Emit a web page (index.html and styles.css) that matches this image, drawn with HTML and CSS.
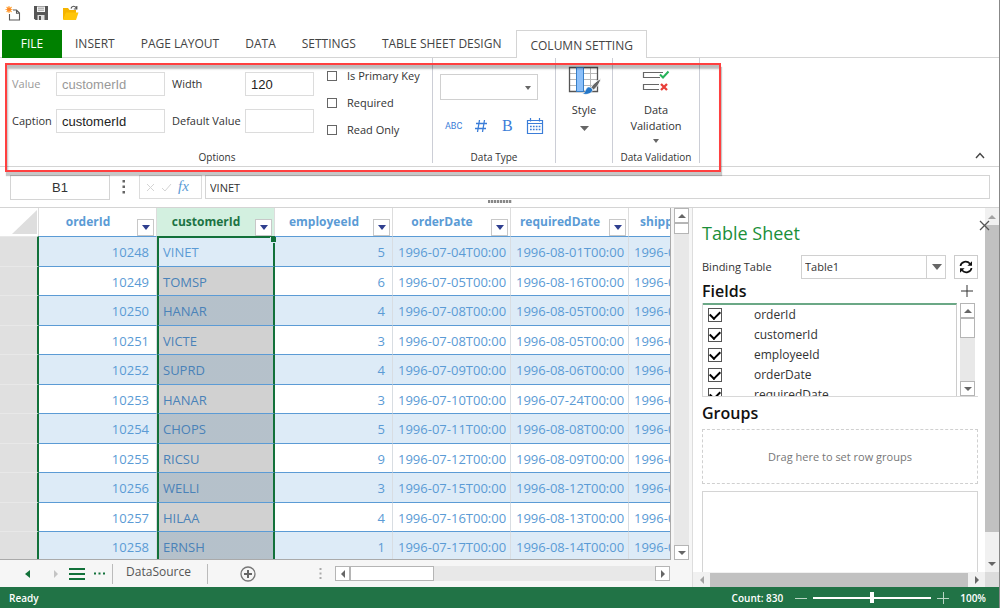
FILE: index.html
```html
<!DOCTYPE html>
<html lang="en">
<head>
<meta charset="utf-8">
<title>Table Sheet Designer</title>
<link rel="stylesheet" href="styles.css">
</head>
<body>
<div class="app">
  <div class="quick">
    <button aria-label="New"><svg width="16" height="16" viewBox="0 0 16 16"><path d="M8 5h3.500l3 3v7H4.500V9M11.500 5v3.200h3" fill="none" stroke="#5a5a5a" stroke-width="1.100"/><path d="M4 1v7M.5 4.500h7M1.600 2l5 5M6.600 2l-5 5" stroke="#ffac45" stroke-width="1.200"/><circle cx="4" cy="4.500" r="2" fill="#ff8a2a"/></svg></button>
    <button aria-label="Save"><svg width="16" height="16" viewBox="0 0 16 16"><path d="M1 1h14v14H2.500L1 13.500z" fill="#555"/><path d="M4 1.500h8V7H4z" fill="#f4f4f4"/><path d="M5 3.200h6M5 5.200h6" stroke="#888" stroke-width=".8"/><path d="M4.500 10h7v5h-7z" fill="#ddd"/><path d="M6 11h2v4H6z" fill="#555"/></svg></button>
    <button aria-label="Open"><svg width="18" height="16" viewBox="0 0 18 16"><path d="M2 14V3h5l1.500 2H15v3H5.500L3 14" fill="#f5b400"/><path d="M5 7.500H17.500L15 15H2z" fill="#ffc60a"/><path d="M10 3.500c.8-3 4.500-3 5.500.2M15.800 1v3h-3" fill="none" stroke="#555" stroke-width="1.200"/></svg></button>
  </div>
  <nav class="tabs">
    <button class="tab file">FILE</button>
    <button class="tab">INSERT</button>
    <button class="tab">PAGE LAYOUT</button>
    <button class="tab">DATA</button>
    <button class="tab">SETTINGS</button>
    <button class="tab">TABLE SHEET DESIGN</button>
    <button class="tab active">COLUMN SETTING</button>
  </nav>
  <section class="ribbon">
    <div class="group options">
      <div class="group-body">
        <div class="fields">
          <label class="muted" for="value">Value</label><input id="value" class="muted" value="customerId" disabled>
          <label class="second" for="width">Width</label><input id="width" value="120">
          <label for="caption">Caption</label><input id="caption" value="customerId">
          <label class="second" for="default">Default Value</label><input id="default">
        </div>
        <div class="checks">
          <label><input type="checkbox">Is Primary Key</label>
          <label><input type="checkbox">Required</label>
          <label><input type="checkbox">Read Only</label>
        </div>
      </div>
      <div class="caption">Options</div>
    </div>
    <div class="group types">
      <div class="type-body">
        <div class="combo"><select aria-label="Data type"><option></option></select><svg width="6" height="4" viewBox="0 0 6 4"><path d="M0 0h6L3 4z" fill="#666"/></svg></div>
        <div class="type-icons">
          <button class="abc">ABC</button>
          <button aria-label="Number"><svg width="14" height="14" viewBox="0 0 14 14"><path d="M5.500 1L3.500 13M10.500 1L8.500 13M2 4.500h11M1 9.500h11" stroke="#3b7dd8" stroke-width="1.300"/></svg></button>
          <button class="bold">B</button>
          <button aria-label="Date"><svg width="18" height="18" viewBox="0 0 18 18"><path d="M1.500 3.500h15v13h-15zM1.500 6.500h15M4.500 1v3.500M13.500 1v3.500" fill="none" stroke="#3b7dd8" stroke-width="1.200"/><path d="M4 9.500h10.500M4 12.500h10.500" stroke="#3b7dd8" stroke-width="1.700" stroke-dasharray="1.700 1.200"/></svg></button>
        </div>
      </div>
      <div class="caption">Data Type</div>
    </div>
    <div class="group style">
      <button class="big">
        <svg width="33" height="30" viewBox="0 0 33 30"><path d="M1.500 2.500h28v24h-28z" fill="#fff"/><path d="M1.500 8.500h28M1.500 14.500h28M1.500 20.500h28M15.500 2.500v24M22.500 2.500v24" stroke="#b8b8b8"/><path d="M1.500 2.500h28v24h-28z" fill="none" stroke="#555" stroke-width="1.300"/><path d="M8.500 2.500h7v24h-7z" fill="#8cc0fa" stroke="#377fc8"/><path d="M33 13.500c-4 2-8.500 6-10 9l2.500 2.500c3-2 6.500-7 7.500-11.500" fill="#666" stroke="#fff" stroke-width=".9"/><path d="M20.500 22c2.500 0 4.500 2 4 3.800-1.500 3.200-6.500 4.200-10 3 3.500-.8 2.500-5.800 6-6.800" fill="#2477c8" stroke="#fff" stroke-width=".5"/></svg>
        <span>Style</span>
        <svg class="arrow" width="9" height="5" viewBox="0 0 9 5"><path d="M0 0h9L4.500 5z" fill="#666"/></svg>
      </button>
    </div>
    <div class="group validation">
      <button class="big">
        <svg width="28" height="30" viewBox="0 0 28 30"><path d="M17 7.500H1.500v5H18M17 19.500H1.500v5H17M17 7.500h4" fill="none" stroke="#666" stroke-width="1.200"/><path d="M18 9.500l3 3L26.500 6.500" fill="none" stroke="#26b35a" stroke-width="2"/><path d="M19 19l6 6M25 19l-6 6" stroke="#e83e38" stroke-width="2.300"/></svg>
        <span>Data<br>Validation</span>
        <svg class="arrow" width="6" height="4" viewBox="0 0 6 4"><path d="M0 0h6L3 4z" fill="#666"/></svg>
      </button>
      <div class="caption">Data Validation</div>
    </div>
    <button class="collapse" aria-label="Collapse ribbon"><svg width="10" height="7" viewBox="0 0 10 7"><path d="M1 6l4-4.500L9 6" fill="none" stroke="#444" stroke-width="1.400"/></svg></button>
    <div class="highlight"></div>
  </section>
  <section class="formula">
    <input class="name" aria-label="Cell" value="B1">
    <svg class="dots" width="4" height="14" viewBox="0 0 4 14"><path d="M.5 0h2.500v2.500H.5zM.5 5.500h2.500v2.500H.5zM.5 11h2.500v2.500H.5z" fill="#666"/></svg>
    <div class="fx"><svg width="9" height="9" viewBox="0 0 9 9"><path d="M1 1l7 7M8 1L1 8" stroke="#d4d4d4"/></svg><svg width="11" height="9" viewBox="0 0 11 9"><path d="M1 5l3 3 6-7" fill="none" stroke="#d4d4d4"/></svg><button>fx</button></div>
    <input class="expr" aria-label="Formula" value="VINET">
    <div class="grip"></div>
  </section>
  <main class="main">
    <div class="left">
      <div class="grid-area">
        <div class="sheet">
          <table>
            <colgroup><col class="c-head"><col><col><col><col><col><col></colgroup>
            <thead><tr>
              <th><svg class="corner" width="25" height="24" viewBox="0 0 25 24"><path d="M25 0v24H0z" fill="#dedede"/></svg></th>
              <th><div><span>orderId</span><button aria-label="Filter orderId"></button></div></th>
              <th class="sel"><div><span>customerId</span><button aria-label="Filter customerId"></button></div></th>
              <th><div><span>employeeId</span><button aria-label="Filter employeeId"></button></div></th>
              <th><div><span>orderDate</span><button aria-label="Filter orderDate"></button></div></th>
              <th><div><span>requiredDate</span><button aria-label="Filter requiredDate"></button></div></th>
              <th><div><span>shippedDate</span><button aria-label="Filter shippedDate"></button></div></th>
            </tr></thead>
            <tbody>
              <tr><td></td><td>10248</td><td>VINET<i class="handle"></i></td><td>5</td><td>1996-07-04T00:00</td><td>1996-08-01T00:00</td><td>1996-07-16T00:00</td></tr>
              <tr><td></td><td>10249</td><td>TOMSP</td><td>6</td><td>1996-07-05T00:00</td><td>1996-08-16T00:00</td><td>1996-07-10T00:00</td></tr>
              <tr><td></td><td>10250</td><td>HANAR</td><td>4</td><td>1996-07-08T00:00</td><td>1996-08-05T00:00</td><td>1996-07-12T00:00</td></tr>
              <tr><td></td><td>10251</td><td>VICTE</td><td>3</td><td>1996-07-08T00:00</td><td>1996-08-05T00:00</td><td>1996-07-15T00:00</td></tr>
              <tr><td></td><td>10252</td><td>SUPRD</td><td>4</td><td>1996-07-09T00:00</td><td>1996-08-06T00:00</td><td>1996-07-11T00:00</td></tr>
              <tr><td></td><td>10253</td><td>HANAR</td><td>3</td><td>1996-07-10T00:00</td><td>1996-07-24T00:00</td><td>1996-07-16T00:00</td></tr>
              <tr><td></td><td>10254</td><td>CHOPS</td><td>5</td><td>1996-07-11T00:00</td><td>1996-08-08T00:00</td><td>1996-07-23T00:00</td></tr>
              <tr><td></td><td>10255</td><td>RICSU</td><td>9</td><td>1996-07-12T00:00</td><td>1996-08-09T00:00</td><td>1996-07-15T00:00</td></tr>
              <tr><td></td><td>10256</td><td>WELLI</td><td>3</td><td>1996-07-15T00:00</td><td>1996-08-12T00:00</td><td>1996-07-17T00:00</td></tr>
              <tr><td></td><td>10257</td><td>HILAA</td><td>4</td><td>1996-07-16T00:00</td><td>1996-08-13T00:00</td><td>1996-07-22T00:00</td></tr>
              <tr><td></td><td>10258</td><td>ERNSH</td><td>1</td><td>1996-07-17T00:00</td><td>1996-08-14T00:00</td><td>1996-07-23T00:00</td></tr>
            </tbody>
          </table>
        </div>
        <div class="vbar"><button class="up" aria-label="Up"></button><span class="thumb"></span><button class="down" aria-label="Down"></button></div>
      </div>
      <div class="sheetbar">
        <div class="sheetnav">
          <button class="tri l" aria-label="Previous"></button>
          <button class="tri r" aria-label="Next"></button>
          <button class="menu" aria-label="All sheets"><svg width="16" height="12" viewBox="0 0 16 12"><path d="M0 1h16M0 6h16M0 11h16" stroke="#12713a" stroke-width="2"/></svg></button>
          <button aria-label="More sheets"><svg width="11" height="3" viewBox="0 0 11 3"><path d="M0 .5h2v2H0zM4.500 .5h2v2h-2zM9 .5h2v2H9z" fill="#12713a"/></svg></button>
          <button class="source">DataSource</button>
          <button class="add" aria-label="Add sheet"><svg width="16" height="16" viewBox="0 0 16 16"><circle cx="8" cy="8" r="7" fill="none" stroke="#777" stroke-width="1.300"/><path d="M8 4v8M4 8h8" stroke="#666" stroke-width="2"/></svg></button>
          <svg class="more" width="3" height="11" viewBox="0 0 3 11"><path d="M.5 0h2v2h-2zM.5 4.500h2v2h-2zM.5 9h2v2h-2z" fill="#aaa"/></svg>
        </div>
        <div class="hbar"><button class="tri l" aria-label="Left"></button><span class="thumb"></span><button class="tri r" aria-label="Right"></button></div>
      </div>
    </div>
    <aside class="pane">
      <div class="pane-main">
        <div class="pane-body">
          <h1>Table Sheet</h1>
          <div class="binding">
            <label for="bind">Binding Table</label>
            <div class="combo"><select id="bind"><option>Table1</option></select><span class="drop"><svg width="10" height="6" viewBox="0 0 10 6"><path d="M0 0h10L5 6z" fill="#666"/></svg></span></div>
            <button class="refresh" aria-label="Refresh"><svg width="14" height="14" viewBox="0 0 14 14"><path d="M1.500 6C2 1.500 8 .2 11 3.800M12.500 8C12 12.500 6 13.800 3 10.200" fill="none" stroke="#111" stroke-width="1.700"/><path d="M13 1.200v4.600H8.400zM1 12.800V8.200h4.600z" fill="#111"/></svg></button>
          </div>
          <div class="fields-head"><h2>Fields</h2><button aria-label="Add field"><svg width="12" height="12" viewBox="0 0 12 12"><path d="M6 0v12M0 6h12" stroke="#333"/></svg></button></div>
          <div class="list">
            <div class="items">
              <label><input type="checkbox" checked>orderId</label>
              <label><input type="checkbox" checked>customerId</label>
              <label><input type="checkbox" checked>employeeId</label>
              <label><input type="checkbox" checked>orderDate</label>
              <label><input type="checkbox" checked>requiredDate</label>
            </div>
            <div class="vbar small"><button class="up" aria-label="Up"></button><span class="thumb"></span><button class="down" aria-label="Down"></button></div>
          </div>
          <h2 class="groups">Groups</h2>
          <div class="dropzone">Drag here to set row groups</div>
          <div class="box"></div>
          <button class="close" aria-label="Close"><svg width="11" height="11" viewBox="0 0 11 11"><path d="M1 1l9 9M10 1l-9 9" stroke="#555" stroke-width="1.300"/></svg></button>
        </div>
        <div class="pane-h"><button class="tri l" aria-label="Left"></button><span></span><button class="tri r" aria-label="Right"></button></div>
      </div>
      <div class="pane-v"><button class="up" aria-label="Up"></button><span></span><button class="down" aria-label="Down"></button><div class="pane-corner"></div></div>
    </aside>
  </main>
  <footer class="status">
    <span>Ready</span>
    <span class="count">Count: 830</span>
    <button aria-label="Zoom out"><svg width="12" height="12" viewBox="0 0 12 12"><path d="M0 6.500h12" stroke="#b9d5c4"/></svg></button>
    <input type="range" aria-label="Zoom" min="0" max="100" value="50">
    <button aria-label="Zoom in"><svg width="12" height="12" viewBox="0 0 12 12"><path d="M0 6.500h12M6.500 0v12" stroke="#b9d5c4"/></svg></button>
    <span class="pct">100%</span>
  </footer>
</div>
</body>
</html>
```
FILE: styles.css
```css
* { box-sizing: border-box; }
body { margin: 0; font: 12px/16px "Open Sans", "Noto Sans", sans-serif; color: #333; background: #fff; }
button { border: 0; padding: 0; margin: 0; background: none; font: inherit; color: inherit; }
input, select { font: inherit; color: inherit; margin: 0; border-radius: 0; min-width: 0; }
svg { display: block; }
h1, h2 { margin: 0; font-weight: 400; }
.app { display: flex; flex-direction: column; height: 100vh; border-right: 1px solid #888; }

.quick { display: flex; align-items: center; gap: 12px; height: 30px; padding: 0 0 4px 5px; flex: none; }
.tabs { display: flex; height: 28px; padding-left: 2px; border-bottom: 1px solid #d4d4d4; flex: none; }
.tab { padding: 0 13px; height: 28px; color: #444; }
.tab.file { background: #008000; color: #fff; width: 60px; }
.tab.active { background: #fff; border: 1px solid #d4d4d4; border-bottom: 0; padding: 2px 13px 0; margin-left: 2px; }

.ribbon { position: relative; display: flex; height: 109px; flex: none; border-bottom: 1px solid #d4d4d4; padding: 0 0 3px 2px; font-size: 11px; }
.group { display: flex; flex-direction: column; border-right: 1px solid #ccced6; }
.caption { margin-top: auto; font-size: 10px; line-height: 12px; text-align: center; }
.options { width: 431px; }
.types { width: 123px; }
.style { width: 57px; }
.validation { width: 87px; }
.group-body { display: flex; gap: 13px; padding: 10px 0 0 10px; }
.fields { display: grid; grid-template-columns: 44px 109px 80px 69px; grid-template-rows: 24px 24px; row-gap: 13px; align-items: center; padding-top: 4px; }
.fields .second { padding-left: 7px; }
.fields label { white-space: nowrap; }
.fields input { width: 100%; height: 24px; border: 1px solid #dcdcdc; padding: 0 5px; font: 13px "Liberation Sans", Arial, sans-serif; color: #222; background: #fff; }
.fields .muted { color: #999; }
.checks { display: flex; flex-direction: column; gap: 11px; }
.checks label { display: flex; align-items: center; gap: 10px; }
.checks input { appearance: none; width: 10px; height: 10px; border: 1px solid #666; }
.type-body { padding: 16px 0 0 7px; }
.combo { position: relative; display: flex; }
.combo select { appearance: none; border: 1px solid #d0d0d0; background: #fff; width: 98px; height: 26px; padding: 0 3px; }
.types .combo { width: 98px; }
.types .combo > svg { position: absolute; right: 7px; top: 12px; }
.type-icons { display: flex; align-items: center; gap: 12px; padding: 16px 0 0 5px; color: #3b7dd8; }
.abc { font: 9px Roboto, sans-serif; }
.bold { font: 16px/20px "Liberation Serif", serif; width: 14px; }
.big { display: flex; flex-direction: column; align-items: center; padding-top: 7px; line-height: 16px; }
.big span { padding-top: 7px; }
.style .arrow { margin-top: 8px; }
.validation .arrow { margin-top: 5px; }
.collapse { margin: auto 14px 4px auto; }
.highlight { position: absolute; left: 5px; top: 5px; width: 716px; height: 109px; border: 2px solid #ff4040; box-shadow: 1px 4px 1px rgba(0, 0, 0, .22), inset 1px 4px 2px rgba(0, 0, 0, .26); pointer-events: none; z-index: 2; }

.formula { position: relative; display: flex; height: 41px; flex: none; padding: 8px 9px 0 10px; border-bottom: 1px solid #d4d4d4; align-items: flex-start; }
.formula input { border: 1px solid #d4d4d4; height: 24px; }
.formula .name { width: 100px; height: 25px; text-align: center; font: 13px "Liberation Sans", Arial, sans-serif; }
.dots { margin: 5px 13px 0 12px; }
.fx { display: flex; align-items: center; gap: 6px; width: 63px; height: 24px; border: 1px solid #dcdcdc; padding-left: 6px; margin-right: 3px; }
.fx button { font: italic 15px/16px "Liberation Serif", serif; color: #5b9bd5; padding-bottom: 2px; }
.formula .expr { flex: 1; padding: 0 4px; font-size: 11px; }
.grip { position: absolute; left: 488px; bottom: 4px; width: 24px; height: 3px; background: repeating-linear-gradient(90deg, #888 0 2px, #ddd 2px 3px); }

.main { display: flex; flex: 1; min-height: 0; }
.left { display: flex; flex-direction: column; flex: 1; min-width: 0; background: #f6f6f6; }
.grid-area { display: flex; flex: 1; min-height: 0; border-right: 1px solid #ddd; }
.sheet { flex: 1; min-width: 0; overflow: hidden; border-right: 1px solid #aaa; border-bottom: 1px solid #aaa; background: #fff; }
table { table-layout: fixed; width: 747px; border-collapse: separate; border-spacing: 0; font-size: 13px; line-height: 18px; color: #5b9bd5; }
.c-head { width: 39px; }
th { height: 28px; padding: 0; border-right: 1px solid #ddd; font-weight: 700; vertical-align: bottom; font-size: 12px; }
th:first-child { padding: 0 2px 2px 12px; }
th div { display: flex; align-items: flex-end; height: 28px; padding-right: 2px; line-height: 28px; }
th span { flex: 1; }
th button { width: 17px; height: 17px; flex: none; border: 1px solid #c8c8c8; background: #fff; display: grid; place-items: center; }
th button::after { content: ""; border: 4px solid transparent; border-top: 5px solid #2f3f8f; border-bottom: 0; }
th.sel { background: #d3f0e0; color: #1c7343; }
td { height: 29px; padding: 2px 5px 1px; overflow: hidden; white-space: nowrap; border-top: 1px solid #5b9bd5; border-right: 1px solid #d8dde2; }
tr:nth-child(odd) td { height: 30px; background-color: #ddebf7; }
td:first-child, tr:nth-child(odd) td:first-child { background: #e0e0e0; border-top-color: #e8e8e8; border-right: 2px solid #12713a; }
td:nth-child(2), td:nth-child(4) { text-align: right; padding-right: 7px; }
td:nth-child(3) { padding-left: 4px; border-left: 2px solid #12713a; border-right: 2px solid #12713a; }
tbody tr:not(:first-child) td:nth-child(3) { background-image: linear-gradient(rgba(0, 0, 0, .18), rgba(0, 0, 0, .18)); color: #4a82b8; }
tbody tr:first-child td:nth-child(3) { position: relative; overflow: visible; border-top: 2px solid #12713a; padding-top: 1px; }
.handle { position: absolute; right: -3px; top: -1px; width: 6px; height: 6px; background: #12713a; border: 1px solid #ddebf7; border-width: 0 0 1px 1px; }

.vbar { display: flex; flex-direction: column; width: 15px; margin: 0 3px; background: #e8e8e8; }
.vbar button, .vbar .thumb { border: 1px solid #b5b5b5; background: #fff; height: 15px; display: grid; place-items: center; flex: none; }
.vbar .thumb { height: 11px; }
.vbar .down { margin-top: auto; }
.up::after { content: ""; border: 4px solid transparent; border-bottom-color: #666; border-top: 0; }
.down::after { content: ""; border: 4px solid transparent; border-top-color: #666; border-bottom: 0; }
.tri { display: grid; place-items: center; }
.tri::after { content: ""; border: 4px solid transparent; }
.tri.l::after { border-right-color: #666; border-left: 0; }
.tri.r::after { border-left-color: #666; border-right: 0; }
.sheetbar { display: flex; align-items: center; height: 27px; flex: none; border-right: 1px solid #ddd; }
.sheetnav { display: flex; align-items: center; width: 335px; padding-left: 25px; flex: none; }
.sheetnav .tri.l::after { border-right-color: #12713a; border-right-width: 5px; }
.sheetnav .tri.r { margin-left: 24px; }
.sheetnav .tri.r::after { border-left-color: #c4c4c4; }
.menu { margin: 0 9px 0 11px; }
.source { font-size: 12px; line-height: 16px; color: #555; border: 1px solid #bbb; border-width: 0 1px; padding: 0 15px 4px 12px; margin-left: 7px; width: 96px; }
.add { margin-left: 32px; }
.more { margin: 0 13px 0 auto; }
.hbar { display: flex; flex: 1; height: 15px; background: #e8e8e8; margin-right: 22px; }
.hbar button, .hbar .thumb { border: 1px solid #b5b5b5; background: #fff; width: 15px; }
.hbar .thumb { width: 84px; }
.hbar .tri.r { margin-left: auto; }

.pane { display: flex; width: 306px; flex: none; }
.pane-main { display: flex; flex-direction: column; flex: 1; min-width: 0; }
.pane-body { position: relative; display: flex; flex-direction: column; flex: 1; min-height: 0; padding: 12px 7px 0 9px; }
.pane h1 { font-size: 18px; line-height: 26px; color: #1b8f3a; }
.pane h2 { font-size: 16px; line-height: 24px; font-weight: 600; color: #111; }
.pane .groups { margin-top: 4px; }
.binding { display: flex; align-items: center; margin-top: 9px; }
.binding label { width: 99px; font-size: 11px; }
.binding .combo { flex: 1; margin-right: 8px; }
.binding select { width: 100%; height: 24px; font-size: 11px; }
.drop { position: absolute; right: 0; top: 0; width: 20px; height: 24px; border-left: 1px solid #d0d0d0; display: grid; place-items: center; pointer-events: none; }
.refresh { width: 24px; height: 24px; border: 1px solid #ccc; display: grid; place-items: center; }
.fields-head { display: flex; align-items: center; justify-content: space-between; padding-right: 5px; }
.list { display: flex; height: 94px; overflow: hidden; border: 1px solid #d8d8d8; border-width: 0 0 1px 1px; }
.items { flex: 1; border-top: 2px solid #6ba886; border-right: 1px solid #ccc; padding-left: 5px; }
.items label { display: flex; align-items: center; gap: 32px; height: 20px; }
.items input { appearance: none; width: 14px; height: 14px; border: 1px solid #555; display: grid; place-items: center; }
.items input::after { content: ""; width: 8px; height: 5px; border: solid #000; border-width: 0 0 2px 2px; transform: rotate(-45deg) translate(1px, -1px); }
.vbar.small .thumb { height: 20px; }
.dropzone { height: 55px; margin-top: 4px; flex: none; border: 1px dashed #d0d0d0; display: grid; place-items: center; color: #777; font-size: 11px; }
.box { flex: 1; margin-top: 7px; border: 1px solid #d4d4d4; border-bottom: 0; }
.close { position: absolute; right: -5px; top: 12px; z-index: 1; }
.pane-h { display: flex; height: 15px; background: #f1f1f1; flex: none; }
.pane-h button { width: 17px; }
.pane-h span { flex: 1; background: #c1c1c1; margin-top: 1px; }
.pane-v { display: flex; flex-direction: column; width: 14px; background: #f1f1f1; }
.pane-v button { height: 17px; display: grid; place-items: center; flex: none; }
.pane-v span { height: 307px; background: #c1c1c1; }
.pane-v .down { margin-top: auto; }
.pane-v .up::after { border-bottom-color: #a3a3a3; }
.pane-h .tri.l::after { border-right-color: #a3a3a3; }
.pane-corner { height: 15px; background: #dcdcdc; flex: none; }

.status { display: flex; align-items: center; height: 21px; flex: none; background: #217346; color: #fff; font-size: 10px; font-weight: 600; padding: 0 13px 0 9px; }
.count { margin: 0 12px 0 auto; }
.status input { appearance: none; width: 118px; height: 12px; margin: 0 6px; background: linear-gradient(#fff, #fff) center / 100% 2px no-repeat; }
.status input::-webkit-slider-thumb { appearance: none; width: 4px; height: 11px; background: #fff; }
.pct { margin-left: 11px; }
```
